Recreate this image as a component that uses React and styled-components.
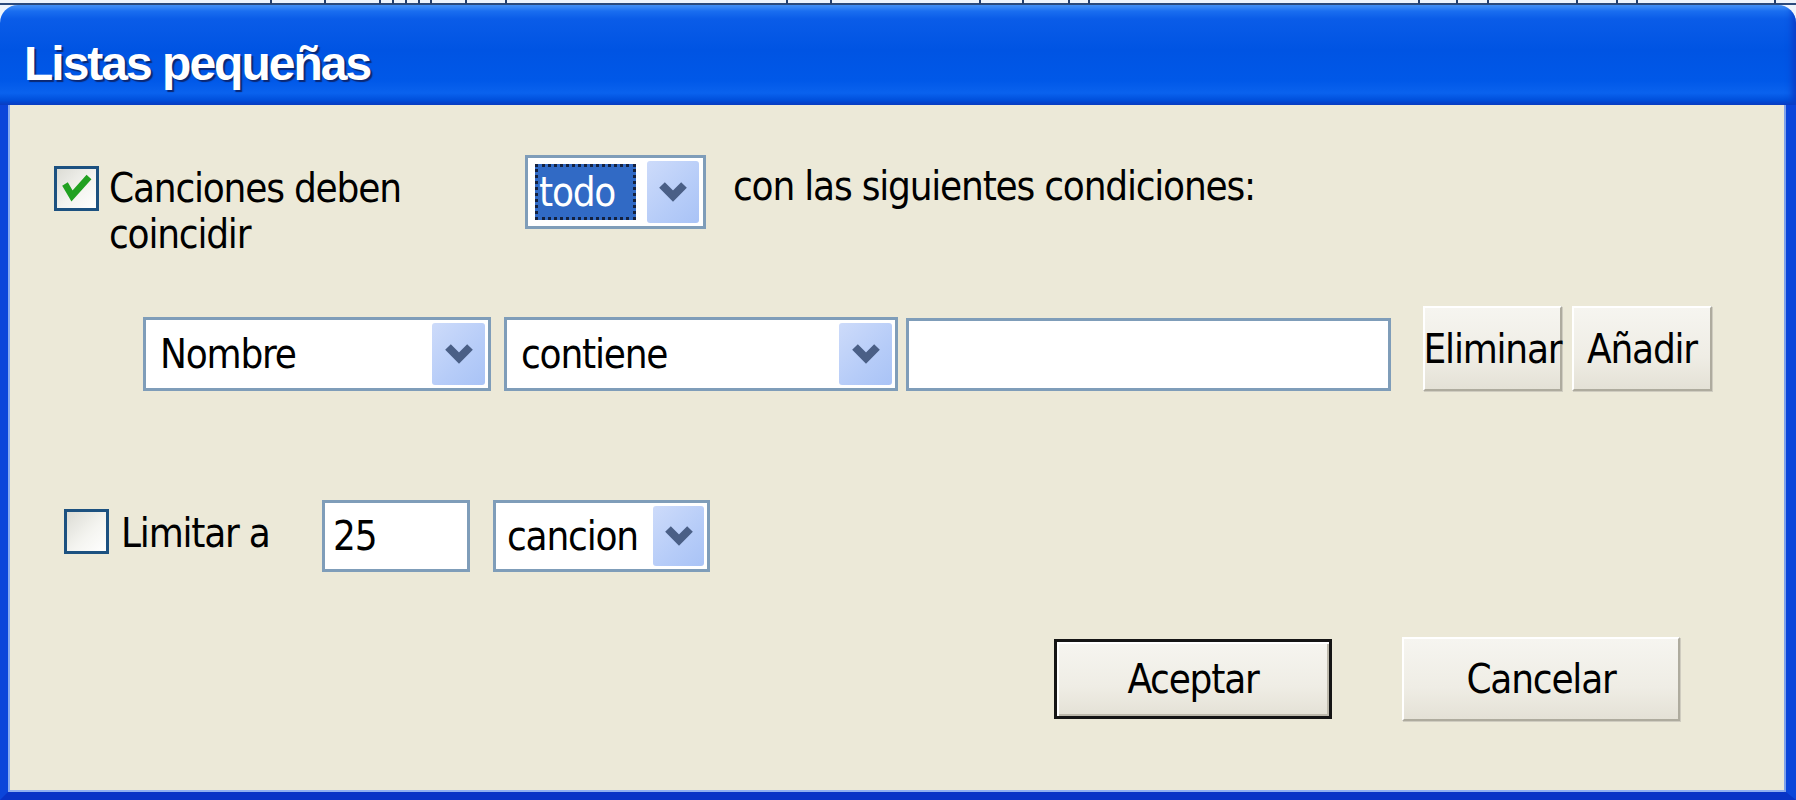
import styled, { createGlobalStyle } from 'styled-components'

const GlobalStyle = createGlobalStyle`
  html, body {
    margin: 0;
    padding: 0;
    background: #eef4fb;
  }
  * {
    box-sizing: border-box;
  }
`

const Page = styled.div`
  width: 1796px;
  height: 800px;
  display: flex;
  flex-direction: column;
  overflow: hidden;
`

const Backdrop = styled.svg`
  display: block;
  flex: none;
`

const Window = styled.div`
  flex: 1;
  display: flex;
  flex-direction: column;
  border-radius: 18px 18px 0 0;
  overflow: hidden;
`

const TitleBar = styled.div`
  height: 100px;
  flex: none;
  padding: 36px 0 0 24px;
  background: linear-gradient(
    #4a97f7 0%,
    #1a6ef0 6%,
    #0a5ce8 14%,
    #0054e3 45%,
    #0058e8 75%,
    #0a62ee 88%,
    #0050dc 95%,
    #0a3cc0 100%
  );
  box-shadow: inset -8px 0 6px -4px #0a3fc8;
`

const Title = styled.h1`
  margin: 0;
  font-family: 'Liberation Sans', Arial, sans-serif;
  font-weight: bold;
  font-size: 48px;
  letter-spacing: -2px;
  line-height: 46px;
  color: #ffffff;
  text-shadow: 2px 2px 1px #0b2772;
`

const Frame = styled.div`
  flex: 1;
  display: flex;
  flex-direction: column;
  background: #ece9d8;
  border-left: 8px solid #0b45da;
  border-right: 10px solid #0b45da;
  border-bottom: 8px solid #0833c6;
  box-shadow: inset 2px 0 0 #86aaf0, inset -2px 0 0 #7fa2ea, inset 0 -2px 0 #8eaef0;
  padding: 50px 0 0 46px;
  font-family: 'DejaVu Sans Condensed', 'DejaVu Sans', sans-serif;
  font-stretch: condensed;
  font-size: 40px;
  letter-spacing: -1.2px;
  color: #000;
`

const Row = styled.div`
  display: flex;
  align-items: ${({ $align }) => $align || 'flex-start'};
  margin-top: ${({ $top }) => $top || 0}px;
  padding-left: ${({ $left }) => $left || 0}px;
`

const CheckGroup = styled.label`
  flex: none;
  width: ${({ $width }) => $width}px;
  display: flex;
  align-items: flex-start;
  gap: ${({ $gap }) => $gap}px;
  margin-top: ${({ $top }) => $top || 0}px;
`

const CheckBox = styled.span`
  flex: none;
  width: 45px;
  height: 45px;
  border: 3px solid #1c5180;
  background: linear-gradient(135deg, #dcdcd5 0%, #f4f4f0 55%, #ffffff 100%);
  display: flex;
`

const LabelText = styled.span`
  width: ${({ $width }) => $width}px;
  line-height: 46px;
  margin-top: ${({ $top }) => $top || 0}px;
`

const Select = styled.div`
  flex: none;
  width: ${({ $width }) => $width}px;
  height: ${({ $height }) => $height}px;
  margin-left: ${({ $left }) => $left || 0}px;
  border: 3px solid #7f9db9;
  background: #ffffff;
  display: flex;
  align-items: center;
  padding: 3px 3px 3px 0;
`

const SelectText = styled.span`
  flex: 1;
  padding-left: ${({ $pad }) => $pad}px;
  white-space: nowrap;
`

const Highlight = styled.span`
  flex: none;
  width: 101px;
  height: 56px;
  margin: 0 11px 0 7px;
  background: #316ac5;
  border: 3px dotted #14213f;
  color: #ffffff;
  display: flex;
  align-items: center;
  padding-left: 1px;
`

const DropButton = styled.span`
  flex: none;
  width: ${({ $width }) => $width || 53}px;
  align-self: stretch;
  border-radius: 3px;
  background: linear-gradient(135deg, #cddbfa 0%, #b6ccf8 60%, #a9c3f6 100%);
  display: flex;
  align-items: center;
  justify-content: center;

  svg {
    flex: none;
    display: block;
    width: 34px;
    height: 26px;
  }
`

const InlineText = styled.span`
  flex: none;
  margin-left: ${({ $left }) => $left || 0}px;
  margin-top: ${({ $top }) => $top || 0}px;
  line-height: 46px;
  white-space: nowrap;
`

const TextBox = styled.div`
  flex: none;
  width: ${({ $width }) => $width}px;
  height: ${({ $height }) => $height}px;
  margin-left: ${({ $left }) => $left || 0}px;
  border: 3px solid #7f9db9;
  background: #ffffff;
  display: flex;
  align-items: center;
  padding-left: ${({ $pad }) => $pad || 0}px;
`

const PushButton = styled.button`
  flex: none;
  width: ${({ $width }) => $width}px;
  height: ${({ $height }) => $height}px;
  margin-left: ${({ $left }) => $left || 0}px;
  padding: 0;
  font: inherit;
  letter-spacing: inherit;
  color: #000;
  white-space: nowrap;
  display: flex;
  align-items: center;
  justify-content: center;
  background: linear-gradient(#f6f5f0 0%, #efede5 60%, #e4e1d6 100%);
  border: ${({ $default }) => ($default ? '3px solid #151515' : '2px solid')};
  border-color: ${({ $default }) =>
    $default ? '#151515' : '#ffffff #aeab9e #aeab9e #ffffff'};
  box-shadow: ${({ $default }) =>
    $default
      ? 'inset 2px 2px 0 #ffffff, inset -2px -2px 0 #bdb9ac'
      : '1px 1px 0 #cfccc0'};
`

const Footer = styled.div`
  display: flex;
  justify-content: flex-end;
  align-items: center;
  gap: 70px;
  margin-top: 65px;
  padding-right: 106px;
`

function Chevron() {
  return (
    <svg viewBox="0 0 34 26">
      <path
        d="M6 6 L17 17 L28 6"
        fill="none"
        stroke="#4a5f86"
        strokeWidth="8"
        strokeLinecap="butt"
        strokeLinejoin="miter"
      />
    </svg>
  )
}

function Check() {
  return (
    <svg width="39" height="39" viewBox="0 0 39 39">
      <path
        d="M8 15 L15 27 L32 8"
        fill="none"
        stroke="#21a121"
        strokeWidth="6.5"
        strokeLinejoin="miter"
      />
    </svg>
  )
}

const ticks = [270, 324, 379, 392, 405, 418, 430, 465, 505, 786, 830, 979, 1022, 1068, 1088, 1418, 1456, 1487, 1576, 1616, 1636, 1774]

function App() {
  return (
    <Page>
      <GlobalStyle />
      <Backdrop width="1796" height="5" viewBox="0 0 1796 5">
        <rect x="0" y="3" width="1796" height="2" fill="#2a4a7c" />
        {ticks.map((x) => (
          <rect key={x} x={x} y="0" width="2" height="4" fill="#233f6e" />
        ))}
      </Backdrop>
      <Window>
        <TitleBar>
          <Title>Listas pequeñas</Title>
        </TitleBar>
        <Frame>
          <Row>
            <CheckGroup $width={471} $gap={10} $top={11}>
              <CheckBox>
                <Check />
              </CheckBox>
              <LabelText $width={330} $top={-1}>
                Canciones deben coincidir
              </LabelText>
            </CheckGroup>
            <Select $width={181} $height={74}>
              <Highlight>todo</Highlight>
              <DropButton $width={52}>
                <Chevron />
              </DropButton>
            </Select>
            <InlineText $left={27} $top={8}>
              con las siguientes condiciones:
            </InlineText>
          </Row>

          <Row $align="flex-end" $top={49} $left={89}>
            <Select $width={348} $height={74}>
              <SelectText $pad={14}>Nombre</SelectText>
              <DropButton>
                <Chevron />
              </DropButton>
            </Select>
            <Select $width={394} $height={74} $left={13}>
              <SelectText $pad={14}>contiene</SelectText>
              <DropButton>
                <Chevron />
              </DropButton>
            </Select>
            <TextBox $width={485} $height={73} $left={8} />
            <PushButton $width={139} $height={85} $left={32}>
              Eliminar
            </PushButton>
            <PushButton $width={140} $height={85} $left={10}>
              Añadir
            </PushButton>
          </Row>

          <Row $top={109} $left={10}>
            <CheckGroup $width={258} $gap={12} $top={9}>
              <CheckBox />
              <LabelText $width={200} $top={1}>
                Limitar a
              </LabelText>
            </CheckGroup>
            <TextBox $width={148} $height={72} $pad={8}>
              25
            </TextBox>
            <Select $width={217} $height={72} $left={23}>
              <SelectText $pad={11}>cancion</SelectText>
              <DropButton $width={51}>
                <Chevron />
              </DropButton>
            </Select>
          </Row>

          <Footer>
            <PushButton $width={278} $height={80} $default>
              Aceptar
            </PushButton>
            <PushButton $width={278} $height={84}>
              Cancelar
            </PushButton>
          </Footer>
        </Frame>
      </Window>
    </Page>
  )
}

export default App
